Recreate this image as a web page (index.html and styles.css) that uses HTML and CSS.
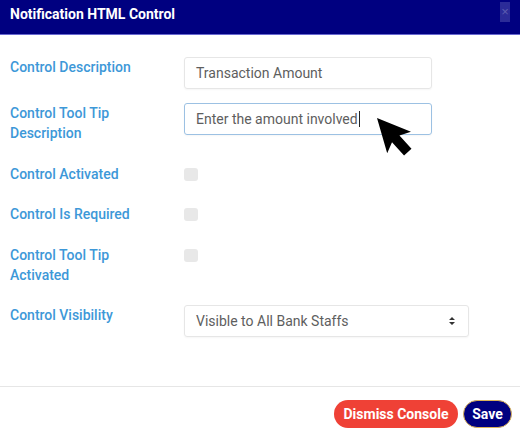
FILE: index.html
```html
<!DOCTYPE html>
<html lang="en">
<head>
  <meta charset="UTF-8">
  <meta name="viewport" content="width=device-width, initial-scale=1.0">
  <title>Notification HTML Control</title>
  <link rel="stylesheet" href="styles.css">
</head>
<body>
  <div class="modal">
    <header class="modal-head">
      <h1>Notification HTML Control</h1>
      <button class="close-btn">&times;</button>
    </header>

    <div class="modal-body">
      <div class="row">
        <label class="row-label">Control Description</label>
        <div class="field">Transaction Amount</div>
      </div>
      <div class="row">
        <label class="row-label">Control Tool Tip<br>Description</label>
        <div class="field focused">Enter the amount involved<span class="caret"></span></div>
      </div>
      <div class="row">
        <label class="row-label">Control Activated</label>
        <span class="check"></span>
      </div>
      <div class="row">
        <label class="row-label">Control Is Required</label>
        <span class="check"></span>
      </div>
      <div class="row">
        <label class="row-label">Control Tool Tip<br>Activated</label>
        <span class="check"></span>
      </div>
      <div class="row">
        <label class="row-label">Control Visibility</label>
        <div class="field select">
          <span>Visible to All Bank Staffs</span>
          <svg class="select-arrows" width="8" height="10" viewBox="0 0 8 10">
            <path d="M4 1 L7 4 L1 4 Z M4 9 L7 6 L1 6 Z" fill="#333"/>
          </svg>
        </div>
      </div>
    </div>

    <footer class="modal-foot">
      <button class="btn btn-dismiss">Dismiss Console</button>
      <button class="btn btn-save">Save</button>
    </footer>

    <!-- mouse pointer over the tooltip field -->
    <svg class="pointer" width="60" height="50" viewBox="0 0 60 50">
      <g transform="translate(17 8) rotate(-42)">
        <path d="M0 0 L16 33 L5 28 L5 46 L-5 46 L-5 28 L-16 33 Z" fill="#000"/>
      </g>
    </svg>
  </div>
</body>
</html>
```

FILE: styles.css
```css
body {
  margin: 0;
  background: #fff;
  font-family: Roboto, "Liberation Sans", sans-serif;
}
.modal {
  position: relative;
  width: 520px;
  height: 430px;
  background: #fff;
}
.modal-head {
  display: flex;
  justify-content: space-between;
  align-items: flex-start;
  height: 29px;
  padding: 5px 10px 0 10px;
  background: #000080;
  border-bottom: 1px solid #6868d0;
}
.modal-head h1 {
  margin: 0;
  font-size: 14px;
  line-height: 18px;
  font-weight: 700;
  color: #fff;
}
.close-btn {
  margin-top: -3px;
  width: 10px;
  height: 20px;
  padding: 0;
  border: none;
  background: #2b2b98;
  color: #5c5cb0;
  font-size: 13px;
  line-height: 20px;
}
.modal-body {
  padding: 22px 0 35px 10px;
}
.row {
  display: grid;
  grid-template-columns: 174px auto;
  align-items: start;
  margin-bottom: 14px;
}
.row-label {
  padding-bottom: 6.5px;
  font-size: 14px;
  line-height: 20px;
  font-weight: 500;
  color: #3d98d8;
}
.field {
  box-sizing: border-box;
  width: 248px;
  height: 32px;
  padding: 0 11px;
  border: 1px solid #e6e6e6;
  border-radius: 3px;
  font-size: 14px;
  line-height: 30px;
  color: #5e5e5e;
  box-shadow: 0 1px 2px rgba(0, 0, 0, 0.04);
}
.field.focused {
  border-color: #9cc1e3;
}
.caret {
  display: inline-block;
  width: 1px;
  height: 16px;
  margin-left: 1px;
  vertical-align: -3px;
  background: #222;
}
.check {
  display: block;
  width: 14px;
  height: 13px;
  margin-top: 4px;
  border-radius: 3px;
  background: #e8e8e8;
}
.field.select {
  display: flex;
  justify-content: space-between;
  align-items: center;
  width: 285px;
  padding-right: 12px;
}
.modal-foot {
  display: flex;
  justify-content: flex-end;
  gap: 5px;
  padding: 13px 8px 0 0;
  border-top: 1px solid #e6e6e6;
}
.btn {
  height: 28px;
  padding: 0 10px;
  border-radius: 14px;
  font-family: Roboto, "Liberation Sans", sans-serif;
  font-size: 14px;
  font-weight: 700;
  color: #fff;
  cursor: pointer;
}
.btn-dismiss {
  width: 124px;
  padding: 0;
  background: #ef4136;
  border: none;
}
.btn-save {
  width: 49px;
  padding: 0;
  background: #000080;
  border: 1.5px solid #d9b25a;
}
.pointer {
  position: absolute;
  left: 360px;
  top: 110px;
}
```
